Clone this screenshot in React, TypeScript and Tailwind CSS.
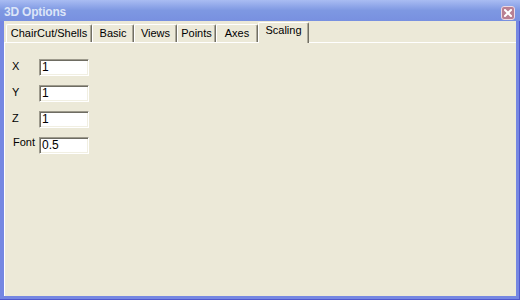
import React from 'react';

const tabs = [
  { label: 'ChairCut/Shells', width: 'w-[86px]' },
  { label: 'Basic', width: 'w-[42px]' },
  { label: 'Views', width: 'w-[43px]' },
  { label: 'Points', width: 'w-[39px]' },
  { label: 'Axes', width: 'w-[42px]' },
];

const fields = [
  { label: 'X', value: '1', labelClass: 'mt-[2px] pl-[7px]' },
  { label: 'Y', value: '1', labelClass: 'mt-[2px] pl-[7px]' },
  { label: 'Z', value: '1', labelClass: 'mt-[2px] pl-[7px]' },
  { label: 'Font', value: '0.5', labelClass: 'mt-0 pl-[8px]' },
];

function CloseButton() {
  return (
    <div className="ml-auto mr-[5px] mt-[6px] flex h-[14px] w-[14px] items-center justify-center self-start rounded-[3px] border border-[#ecd9e4] bg-[#b98092]">
      <svg width="8" height="8" viewBox="0 0 8 8">
        <path d="M1 1 L7 7 M7 1 L1 7" stroke="#ffffff" strokeWidth="2" strokeLinecap="square" />
      </svg>
    </div>
  );
}

export default function App() {
  return (
    <div className="flex h-[300px] w-[520px] flex-col bg-[#7587e2] font-['Liberation_Sans',Arial,sans-serif] text-[11px] text-black shadow-[inset_-1px_-1px_0_#5058cc]">
      {/* Title bar */}
      <div className="flex h-[21px] shrink-0 items-center bg-gradient-to-b from-[#a9bcf2] via-[#7e98e2] to-[#7890e0]">
        <span className="pl-[4px] pt-[2px] text-[12px] font-bold tracking-[-0.2px] text-[#dce5f8]">3D Options</span>
        <CloseButton />
      </div>

      {/* Client area */}
      <div className="mx-[4px] mb-[4px] flex flex-1 flex-col bg-[#ece9d8]">
        {/* Tabs */}
        <div className="flex h-[21px] shrink-0 items-end pl-[2px]">
          {tabs.map((t) => (
            <div
              key={t.label}
              className={`${t.width} h-[18px] rounded-t-[2px] border-l border-t border-r border-l-white border-t-white border-r-[#716f64] pt-[3px] text-center leading-[11px] shadow-[inset_-1px_0_0_#aca899]`}
            >
              {t.label}
            </div>
          ))}
          <div className="relative z-10 mb-[-1px] h-[21px] w-[51px] rounded-t-[2px] border-l border-t border-r border-l-white border-t-white border-r-[#716f64] bg-[#ece9d8] pt-[2px] text-center leading-[11px] shadow-[inset_-1px_0_0_#aca899]">
            Scaling
          </div>
        </div>

        {/* Tab panel */}
        <div className="flex flex-1 flex-col gap-[9px] border-l border-t border-white pt-[16px]">
          {fields.map((f) => (
            <div key={f.label} className="flex h-[17px] items-start">
              <div className={`w-[34px] leading-[11px] ${f.labelClass}`}>{f.label}</div>
              <div className="h-[17px] w-[50px] border border-b-white border-l-[#9d9a8c] border-r-white border-t-[#9d9a8c] bg-white pl-[2px] pt-[1px] text-[12px] leading-[12px] shadow-[inset_1px_1px_0_#6e6c62,inset_-1px_-1px_0_#f1efe2]">
                {f.value}
              </div>
            </div>
          ))}
        </div>
      </div>
    </div>
  );
}
